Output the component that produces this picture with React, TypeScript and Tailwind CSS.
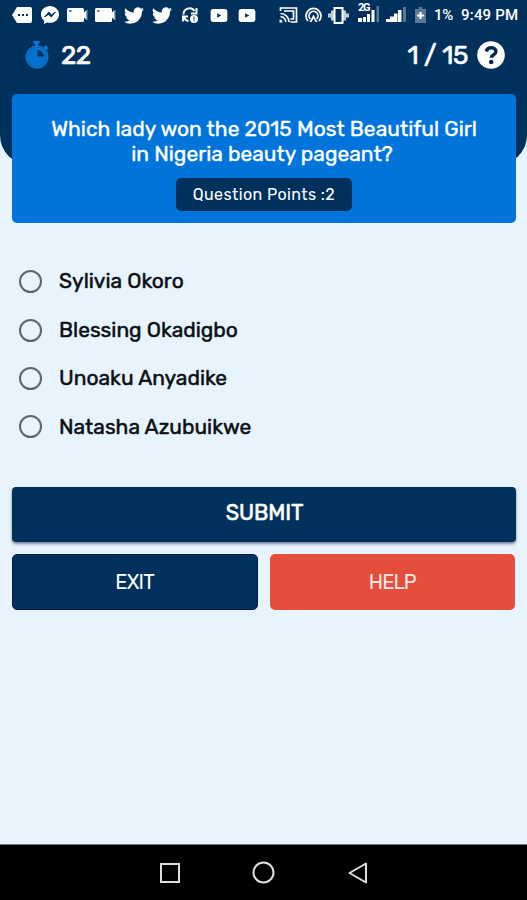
import type { ReactNode } from "react";

type GlyphProps = { className: string; viewBox: string; children: ReactNode };

function Glyph({ className, viewBox, children }: GlyphProps) {
  return (
    <svg className={"shrink-0 " + className} viewBox={viewBox} fill="currentColor" aria-hidden="true">
      {children}
    </svg>
  );
}

const NAVY = "#00305c";

function Camera({ className }: { className: string }) {
  return (
    <Glyph className={className} viewBox="0 0 21 16">
      <rect x="0" y="1" width="17" height="14" rx="1.5" />
      <path d="M16 6l3-2v8l-3-2z" />
      <path d="M18 4l2.5-1.5v11L18 12z" opacity=".55" />
      <rect x="2" y="3" width="2.5" height="2" fill={NAVY} opacity=".6" />
    </Glyph>
  );
}

function Bird({ className }: { className: string }) {
  return (
    <Glyph className={className} viewBox="0 2 24 20">
      <path d="M23.95 4.57a10 10 0 01-2.82.77 4.96 4.96 0 002.16-2.72c-.95.55-2 .95-3.13 1.18a4.92 4.92 0 00-8.38 4.48C7.69 8.1 4.07 6.13 1.64 3.16a4.92 4.92 0 001.52 6.57 4.9 4.9 0 01-2.23-.61v.06a4.92 4.92 0 003.95 4.83 5 5 0 01-2.21.08 4.94 4.94 0 004.6 3.42A9.87 9.87 0 010 19.54a13.99 13.99 0 007.55 2.21c9.05 0 14-7.5 14-13.98 0-.21 0-.42-.02-.63a9.94 9.94 0 002.42-2.57z" />
    </Glyph>
  );
}

function Video({ className }: { className: string }) {
  return (
    <Glyph className={className} viewBox="0 0 18 14">
      <rect width="18" height="14" rx="3" />
      <path d="M7 4.5v5l4.5-2.5z" fill={NAVY} />
    </Glyph>
  );
}

function StatusBar() {
  return (
    <div className="flex h-[30px] items-center pl-3 text-white">
      <Glyph className="h-4 w-5" viewBox="0 0 20 16">
        <path d="M5 0h13a2 2 0 012 2v12a2 2 0 01-2 2H5L0 8z" />
        <path d="M6 7h2v2H6zM10 7h2v2h-2zM14 7h2v2h-2z" fill={NAVY} />
      </Glyph>
      <Glyph className="ml-[9px] h-[18px] w-[18px]" viewBox="0 0 18 18">
        <path d="M9 0C4 0 0 3.6 0 8.3c0 2.6 1.2 4.9 3.1 6.3V18l3-1.6c.9.2 1.9.4 2.9.4 5 0 9-3.7 9-8.4S14 0 9 0z" />
        <path d="M3.5 11L7.8 6l2.7 2.7L14.5 6l-4.200 5-2.800-2.500z" fill={NAVY} stroke={NAVY} strokeWidth=".8" />
      </Glyph>
      <Camera className="ml-2 h-4 w-[21px]" />
      <Camera className="ml-[7px] h-4 w-[21px]" />
      <Bird className="ml-[8px] h-[17px] w-[20px]" />
      <Bird className="ml-[8px] h-[17px] w-[20px]" />
      <Glyph className="ml-[10px] h-4 w-4" viewBox="0 0 16 16">
        <path d="M1.5 7.5A6 6 0 0112.5 4M14.5 1v5.5H9M6.5 14A6 6 0 012 10.500M1 14.500V9.500h5" fill="none" stroke="currentColor" strokeWidth="2" />
        <circle cx="12" cy="12" r="4" />
        <path d="M11.5 9.500h1v3h-1zM11.500 13.200h1v1h-1z" fill={NAVY} />
      </Glyph>
      <Video className="ml-[12px] h-[13px] w-[18px]" />
      <Video className="ml-[10px] h-[13px] w-[18px]" />
      <Glyph className="ml-[23px] h-4 w-[19px]" viewBox="0 0 18 16">
        <path d="M1 4V1h16v14h-6M4.500 4h9.500v8h-3M1 6.500A8.500 8.500 0 019.500 15M1 9.700A5.300 5.300 0 016.300 15" fill="none" stroke="currentColor" strokeWidth="1.700" />
        <path d="M0 12.500A3 3 0 013 15.500H0z" />
      </Glyph>
      <Glyph className="ml-[7px] h-4 w-[17px]" viewBox="0 0 17 16">
        <path d="M3 14A7.500 7.500 0 1114 14M5.300 12a4.500 4.500 0 116.400 0" fill="none" stroke="currentColor" strokeWidth="1.700" />
        <path d="M8.500 7.500l4 7.500h-2l-2-3.500-2 3.500h-2z" />
      </Glyph>
      <Glyph className="ml-[6px] h-[17px] w-[21px]" viewBox="0 0 21 17">
        <path d="M6.500 1h8v15h-8z" fill="none" stroke="currentColor" strokeWidth="2" />
        <path d="M3 3.500h3v10H3zM15 3.500h3v10h-3zM0 6.500h3v4H0zM18 6.500h3v4h-3z" opacity=".75" />
      </Glyph>
      <div className="relative ml-[8px] h-[22px] w-[22px] shrink-0">
        <Glyph className="h-[22px] w-[22px]" viewBox="0 0 22 22">
          <path d="M1 14h4v4H1zM6 13h3v5H6zM10 10h3v8h-3zM14.500 6h3v12h-3z" />
          <path d="M19.500 2H22v16h-2.500z" opacity=".35" />
        </Glyph>
        <span className="absolute -top-[2px] left-px font-[Roboto,sans-serif] text-[11px] leading-[11px] font-bold tracking-[-1.2px]">2G</span>
      </div>
      <Glyph className="ml-[7px] h-4 w-[20px]" viewBox="0 0 20 16">
        <path d="M0 12h4v3H0zM4 9.500h4V15H4zM8 6.500h3.500V15H8zM12 3h3.500v12H12z" />
        <path d="M17 0h3v15h-3z" opacity=".35" />
      </Glyph>
      <Glyph className="ml-[9px] h-4 w-[11px]" viewBox="0 0 11 16">
        <path d="M3.500 0h4v2H11v14H0V2h3.500z" opacity=".35" />
        <path d="M4.500 5h2v2.500H9v2H6.500V12h-2V9.500H2v-2h2.500z" />
      </Glyph>
      <span className="ml-[8px] w-[27px] font-[Roboto,sans-serif] text-[15px] font-medium tracking-[-0.2px]">1%</span>
      <span className="font-[Roboto,sans-serif] text-[15px] font-medium tracking-[0.2px] whitespace-nowrap">9:49 PM</span>
    </div>
  );
}

function Header() {
  return (
    <header className="h-[165px] rounded-b-[30px] bg-[#00305c] text-white">
      <StatusBar />
      <div className="flex h-[50px] items-center pr-[22px] pl-[25px]">
        <svg className="h-7 w-6" viewBox="0 0 24 28" fill="none" aria-hidden="true">
          <path d="M8.500 0h6v2.500H13v3h-3v-3H8.500zM18.500 6l2-2 3 3-2 2z" fill="#0878dc" />
          <circle cx="12" cy="16" r="10.700" stroke="#0672d2" strokeWidth="1.600" />
          <circle cx="12" cy="16" r="10" fill="#0670cf" />
          <path d="M12.500 9a7 7 0 016.500 6.500h-6.500z" fill="#00305c" />
        </svg>
        <span className="ml-3 text-[26px] tracking-[-0.6px] [-webkit-text-stroke:0.7px_currentColor]">22</span>
        <span className="ml-auto text-[26px] tracking-[-0.4px] [-webkit-text-stroke:0.6px_currentColor]">1 / 15</span>
        <svg className="ml-[9px] h-7 w-7" viewBox="0 0 28 28" aria-hidden="true">
          <circle cx="14" cy="14" r="13.800" fill="white" />
          <path d="M9.300 10.500c.6-2.500 2.500-3.700 4.900-3.700 2.700 0 4.700 1.500 4.700 3.800 0 3.500-4.600 3.300-4.600 6.100" fill="none" stroke="#002b55" strokeWidth="3.500" />
          <circle cx="14.200" cy="21" r="2.300" fill="#002b55" />
        </svg>
      </div>
    </header>
  );
}

const answers = ["Sylivia Okoro", "Blessing Okadigbo", "Unoaku Anyadike", "Natasha Azubuikwe"];

export default function App() {
  return (
    <div className="flex h-[900px] w-[527px] flex-col overflow-hidden bg-[#e7f4fe] font-[Rubik,Roboto,sans-serif]">
      <Header />
      <main className="relative -mt-[71px] flex-1 px-3">
        <section className="flex h-[129px] w-[504px] flex-col items-center rounded-[5px] bg-[#0074db] pt-[22px] text-white">
          <h1 className="text-center text-[21px] leading-[25px] [-webkit-text-stroke:0.4px_currentColor]">
            <span className="block tracking-[0.02px]">Which lady won the 2015 Most Beautiful Girl</span>
            <span className="block pr-[4px]">in Nigeria beauty pageant?</span>
          </h1>
          <div className="mt-3 flex h-[33px] w-[176px] items-center justify-center rounded-[5px] bg-[#00305c] text-[16px] tracking-[0.4px]">
            Question Points :2
          </div>
        </section>
        <div className="mt-[34px] pl-[7px]" role="radiogroup">
          {answers.map((name) => (
            <div key={name} role="radio" aria-checked="false" className="flex h-[48.4px] items-center">
              <span className="mt-px h-[23px] w-[23px] rounded-full border-2 border-[#596571]" />
              <span className="ml-[17px] text-[21px] text-[#0c0f13] [-webkit-text-stroke:0.5px_currentColor]">{name}</span>
            </div>
          ))}
        </div>
        <button className="mt-[36px] flex h-[55px] w-[504px] items-center justify-center rounded-[4px] bg-[#00305c] pb-px pl-px text-[21.5px] tracking-[-0.1px] text-white shadow-[0_2px_3px_rgba(0,25,60,0.5)] [-webkit-text-stroke:0.6px_currentColor]">
          SUBMIT
        </button>
        <div className="mt-3 flex gap-3">
          <button className="h-14 w-[246px] rounded-[5px] border border-[#001c46] bg-[#00305c] pt-px text-[20px] tracking-[-0.7px] text-white">EXIT</button>
          <button className="h-14 w-[246px] rounded-[5px] bg-[#e54d3c] pt-px text-[20px] tracking-[-0.9px] text-[#fde9e5]">HELP</button>
        </div>
      </main>
      <nav className="flex h-[56px] shrink-0 items-center border-t border-[#6d777d] bg-black pl-[160px] text-[#dedede]">
        <svg className="h-5 w-5" viewBox="0 0 20 20" fill="none" stroke="currentColor" strokeWidth="2" aria-hidden="true">
          <rect x="1" y="1" width="18" height="18" />
        </svg>
        <svg className="ml-[72px] h-[23px] w-[23px]" viewBox="0 0 23 23" fill="none" stroke="currentColor" strokeWidth="2" aria-hidden="true">
          <circle cx="11.5" cy="11.5" r="10" />
        </svg>
        <svg className="ml-[72.5px] h-[22px] w-5" viewBox="0 0 20 22" fill="none" stroke="currentColor" strokeWidth="2" strokeLinejoin="round" aria-hidden="true">
          <path d="M18 1.5v19L1.500 11z" />
        </svg>
      </nav>
    </div>
  );
}
